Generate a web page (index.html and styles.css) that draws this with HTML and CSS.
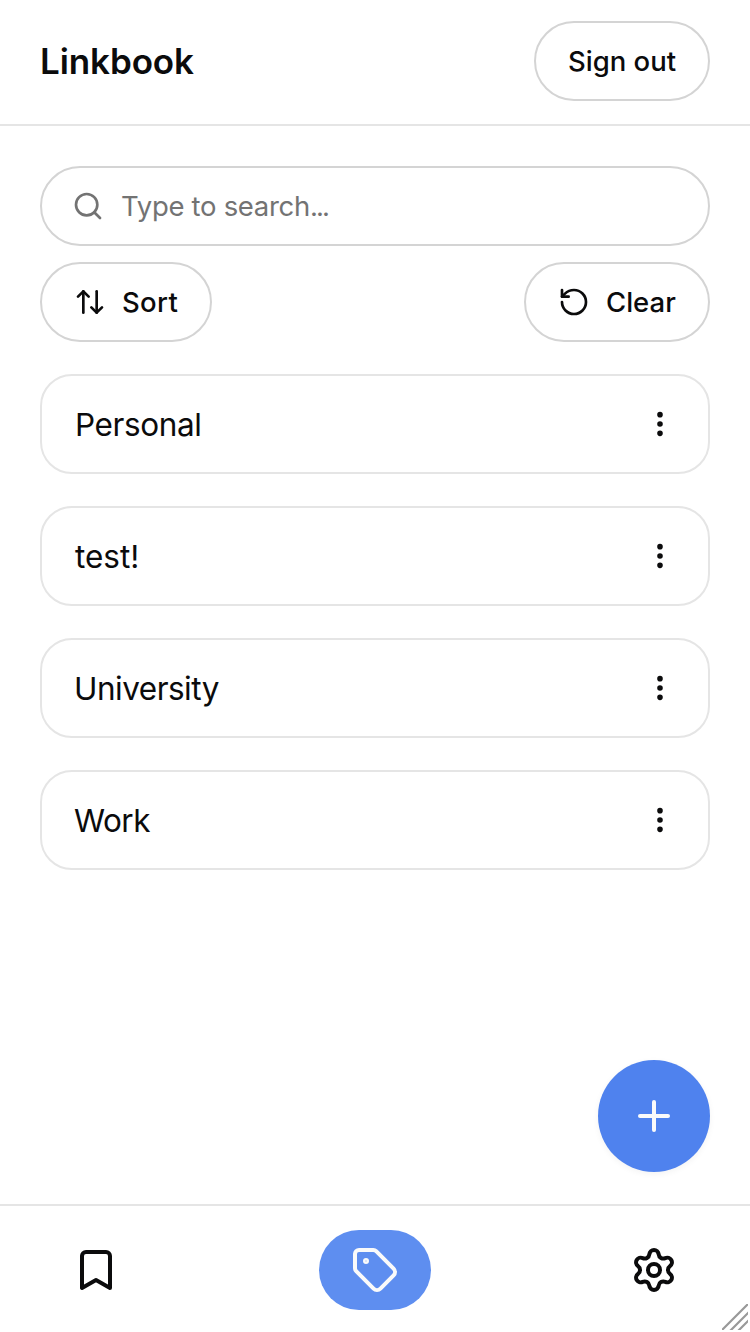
FILE: index.html
```html
<!DOCTYPE html>
<html lang="en">
<head>
<meta charset="utf-8">
<title>Linkbook</title>
<link rel="stylesheet" href="styles.css">
</head>
<body>
<div class="app">
  <header class="header">
    <h1 class="title">Linkbook</h1>
    <button class="pill sign-out"><span>Sign out</span></button>
  </header>
  <main class="main">
    <label class="pill search">
      <svg class="icon" viewBox="0 0 24 24"><circle cx="11" cy="11" r="8"/><path d="m21 21-4.34-4.34"/></svg>
      <span>Type to search<span class="ellipsis">...</span></span>
    </label>
    <div class="tools">
      <button class="pill sort">
        <svg class="icon" viewBox="0 0 24 24"><path d="m21 16-4 4-4-4"/><path d="M17 20V4"/><path d="m3 8 4-4 4 4"/><path d="M7 4v16"/></svg>
        <span>Sort</span>
      </button>
      <button class="pill clear">
        <svg class="icon" viewBox="0 0 24 24"><path d="M3 12a9 9 0 1 0 9-9 9.75 9.75 0 0 0-6.74 2.74L3 8"/><path d="M3 3v5h5"/></svg>
        <span>Clear</span>
      </button>
    </div>
    <ul class="list">
      <li class="card"><span class="label snug">Personal</span><svg class="icon dots" viewBox="0 0 24 24"><circle cx="12" cy="12" r="1"/><circle cx="12" cy="5" r="1"/><circle cx="12" cy="19" r="1"/></svg></li>
      <li class="card"><span class="label">test!</span><svg class="icon dots" viewBox="0 0 24 24"><circle cx="12" cy="12" r="1"/><circle cx="12" cy="5" r="1"/><circle cx="12" cy="19" r="1"/></svg></li>
      <li class="card"><span class="label tight">University</span><svg class="icon dots" viewBox="0 0 24 24"><circle cx="12" cy="12" r="1"/><circle cx="12" cy="5" r="1"/><circle cx="12" cy="19" r="1"/></svg></li>
      <li class="card"><span class="label tight">Work</span><svg class="icon dots" viewBox="0 0 24 24"><circle cx="12" cy="12" r="1"/><circle cx="12" cy="5" r="1"/><circle cx="12" cy="19" r="1"/></svg></li>
    </ul>
    <button class="fab" aria-label="Add"><svg class="icon large" viewBox="0 0 24 24"><path d="M5 12h14"/><path d="M12 5v14"/></svg></button>
  </main>
  <nav class="nav">
    <a class="tab"><svg class="icon large" viewBox="0 0 24 24"><path d="m19 21-7-4-7 4V5a2 2 0 0 1 2-2h10a2 2 0 0 1 2 2v16z"/></svg></a>
    <a class="tab active"><svg class="icon large" viewBox="0 0 24 24"><path d="M12.586 2.586A2 2 0 0 0 11.172 2H4a2 2 0 0 0-2 2v7.172a2 2 0 0 0 .586 1.414l8.704 8.704a2.426 2.426 0 0 0 3.42 0l6.58-6.58a2.426 2.426 0 0 0 0-3.42z"/><circle cx="7.5" cy="7.5" r=".5" fill="currentColor"/></svg></a>
    <a class="tab"><svg class="icon large" viewBox="0 0 24 24"><path d="M9.671 4.136a2.34 2.34 0 0 1 4.659 0 2.34 2.34 0 0 0 3.319 1.915 2.34 2.34 0 0 1 2.33 4.033 2.34 2.34 0 0 0 0 3.831 2.34 2.34 0 0 1-2.33 4.033 2.34 2.34 0 0 0-3.319 1.915 2.34 2.34 0 0 1-4.659 0 2.34 2.34 0 0 0-3.32-1.915 2.34 2.34 0 0 1-2.33-4.033 2.34 2.34 0 0 0 0-3.831A2.34 2.34 0 0 1 6.35 6.051a2.34 2.34 0 0 0 3.319-1.915"/><circle cx="12" cy="12" r="3"/></svg></a>
  </nav>
  <svg class="grip" viewBox="0 0 26 26"><path d="M-1 27 27-1M8 27 27 8M16 27 27 16"/></svg>
</div>
</body>
</html>
```
FILE: styles.css
```css
* { box-sizing: border-box; }
body { margin: 0; background: #fff; color: #0b0b0c; font-family: Inter, "Liberation Sans", sans-serif; }
.app { position: relative; display: flex; flex-direction: column; height: 1332px; overflow: hidden; }
.header { display: flex; justify-content: space-between; align-items: flex-start; height: 126px; padding: 21px 40px 0; border-bottom: 2px solid #e5e5e5; }
.title { margin: 0; font-size: 35px; font-weight: 600; line-height: 81px; letter-spacing: -0.1px; }
.pill { display: flex; align-items: center; height: 80px; padding: 0 32px; border: 2px solid #d4d4d4; border-radius: 40px; background: #fff; color: inherit; font: 500 27.5px/40px Inter, sans-serif; white-space: nowrap; }
.pill .icon { margin-right: 16px; }
.sign-out { width: 176px; }
.main { display: flex; flex-direction: column; flex: 1; padding: 40px 40px 32px; }
.search { padding: 0 30px; color: #737373; font-weight: 400; letter-spacing: -0.3px; }
.search .icon { margin-right: 17px; }
.ellipsis { letter-spacing: -1.9px; }
.tools { display: flex; justify-content: space-between; margin-top: 16px; }
.sort { width: 172px; letter-spacing: 0.3px; }
.clear { width: 186px; }
.list { display: flex; flex-direction: column; gap: 32px; margin: 32px 0 0; padding: 0; list-style: none; }
.card { display: flex; align-items: center; justify-content: space-between; height: 100px; padding: 0 32px; border: 2px solid #e5e5e5; border-radius: 32px; font-size: 31.5px; line-height: 48px; }
.label { padding: 2px 0 0 1px; }
.snug { letter-spacing: -0.4px; }
.tight { padding-left: 0; letter-spacing: -0.5px; }
.icon { flex: none; width: 32px; height: 32px; fill: none; stroke: currentColor; stroke-width: 2; stroke-linecap: round; stroke-linejoin: round; }
.dots { stroke-width: 2.2; }
.large { width: 48px; height: 48px; stroke-width: 2; }
.fab { display: flex; align-items: center; justify-content: center; align-self: flex-end; width: 112px; height: 112px; margin-top: auto; padding: 0; border: 0; border-radius: 50%; background: #4f82ee; color: #fafafa; box-shadow: 0 2px 6px rgb(0 0 0 / 5%); }
.nav { display: flex; justify-content: space-between; height: 128px; padding: 24px 40px; border-top: 2px solid #e5e5e5; }
.tab { display: flex; align-items: center; justify-content: center; width: 112px; height: 80px; border-radius: 40px; }
.active { background: #5e8ef0; color: #fafafa; }
.grip { position: absolute; right: 2px; bottom: 2px; width: 26px; height: 26px; fill: none; stroke: #999; stroke-width: 2.2; }
```
